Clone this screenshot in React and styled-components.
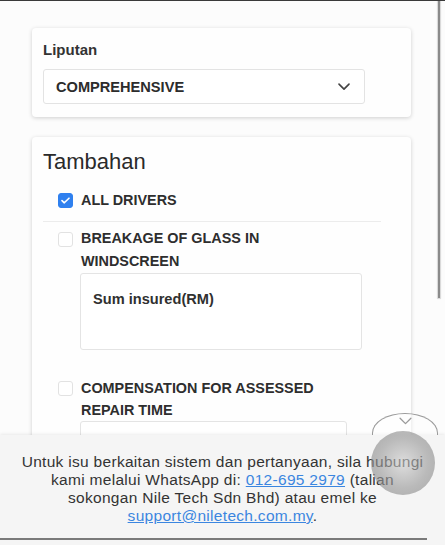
import styled, { createGlobalStyle } from 'styled-components';

const GlobalStyle = createGlobalStyle`
  html, body {
    margin: 0;
    padding: 0;
    background: #fcfcfc;
    font-family: "Liberation Sans", Arial, sans-serif;
    color: #2f2f2f;
  }
  * { box-sizing: border-box; }
`;

//! Page
const Screen = styled.div`
  position: relative;
  width: 445px;
  height: 545px;
  overflow: hidden;
  border-top: 1px solid #3a3a3a;
`;

const Content = styled.div`
  display: flex;
  flex-direction: column;
  gap: 20px;
  padding: 27px 0 0 32px;
  width: 411px;
`;

const ScrollBar = styled.div`
  position: absolute;
  top: 0;
  right: 5px;
  width: 2px;
  height: 297px;
  background: #8a8a8a;
  box-shadow: 0 0 1px 1px #d6d6d6;
`;

const Card = styled.div`
  background: #fefefe;
  border-radius: 4px;
  box-shadow: 0 1px 4px rgba(0, 0, 0, 0.18);
  padding: ${(p) => p.$pad || '12px 11px 13px'};
`;

const Label = styled.div`
  font-size: 15px;
  font-weight: 700;
  line-height: 20px;
  color: #333;
  margin-bottom: 9px;
`;

const Select = styled.div`
  display: flex;
  align-items: center;
  justify-content: space-between;
  width: 322px;
  height: 35px;
  padding: 0 14px 0 12px;
  border: 1px solid #e3e3e3;
  border-radius: 3px;
  background: #fff;
  font-size: 14.6px;
  font-weight: 700;
  color: #2c2c2c;
`;

const Heading = styled.div`
  font-size: 22px;
  line-height: 26px;
  color: #2a2a2a;
  margin-bottom: 14px;
`;

const Option = styled.div`
  width: 338px;
  padding: ${(p) => p.$pad || '0'};
  border-bottom: ${(p) => (p.$divider ? '1px solid #ececec' : 'none')};
`;

const OptionRow = styled.div`
  display: flex;
  align-items: flex-start;
  gap: 8px;
  padding-left: 15px;
`;

const Box = styled.div`
  flex: none;
  width: 15px;
  height: 15px;
  margin-top: ${(p) => p.$top || '4px'};
  border-radius: 3px;
  border: 1px solid ${(p) => (p.$checked ? '#2f80ef' : '#e2e2e2')};
  background: ${(p) => (p.$checked ? '#2f80ef' : '#fff')};
  display: flex;
  align-items: center;
  justify-content: center;
`;

const OptionText = styled.div`
  font-size: 14.4px;
  font-weight: 700;
  line-height: ${(p) => p.$lh || '22px'};
  color: #2e2e2e;
`;

const Field = styled.div`
  margin-left: 37px;
  width: ${(p) => p.$w || '282px'};
  height: 77px;
  border: 1px solid #e4e4e4;
  border-radius: 3px;
  background: #fff;
  padding: 17px 12px;
  font-size: 14.6px;
  font-weight: 700;
  color: #303030;
`;

//! Footer overlay
const Footer = styled.div`
  position: absolute;
  left: 0;
  right: 0;
  bottom: 0;
  height: 110px;
  background: #f5f5f5;
  box-shadow: 0 -1px 3px rgba(0, 0, 0, 0.08);
  padding: 18px 0 0;
  text-align: center;
  font-size: 15.5px;
  letter-spacing: 0.3px;
  line-height: 18px;
  color: #333;
`;

const Link = styled.a`
  color: #3b86e0;
  text-decoration: underline;
`;

const HomeBar = styled.div`
  position: absolute;
  left: 0;
  bottom: 5px;
  width: 427px;
  height: 2px;
  background: #7a7a7a;
`;

const Tab = styled.div`
  position: absolute;
  left: 372px;
  top: 412px;
  width: 66px;
  height: 22px;
  border: 1px solid #9a9a9a;
  border-bottom: none;
  border-radius: 33px 33px 0 0 / 20px 20px 0 0;
  background: rgba(255, 255, 255, 0.4);
  display: flex;
  justify-content: center;
  padding-top: 3px;
`;

const Touch = styled.div`
  position: absolute;
  left: 371px;
  top: 430px;
  width: 64px;
  height: 64px;
  border-radius: 50%;
  background: radial-gradient(circle, rgba(205, 205, 205, 0.6) 0%, rgba(150, 150, 150, 0.62) 55%, rgba(128, 128, 128, 0.65) 100%);
`;

const Chevron = ({ size = 12, color = '#444', width = 1.6 }) => (
  <svg width={size} height={size * 0.6} viewBox="0 0 12 7" fill="none">
    <path d="M1 1l5 5 5-5" stroke={color} strokeWidth={width} strokeLinecap="round" strokeLinejoin="round" />
  </svg>
);

const Tick = () => (
  <svg width="9" height="7" viewBox="0 0 9 7" fill="none">
    <path d="M1 3.6l2.3 2.2L8 1.2" stroke="#fff" strokeWidth="1.6" strokeLinecap="round" strokeLinejoin="round" />
  </svg>
);

const App = () => {
  return (
    <>
      <GlobalStyle />
      <Screen>
        <Content>
          <Card>
            <Label>Liputan</Label>
            <Select>
              COMPREHENSIVE
              <Chevron />
            </Select>
          </Card>

          <Card $pad="12px 11px 40px">
            <Heading>Tambahan</Heading>
            <Option $divider $pad="0 0 10px">
              <OptionRow>
                <Box $checked $top="3.5px">
                  <Tick />
                </Box>
                <OptionText>ALL DRIVERS</OptionText>
              </OptionRow>
            </Option>
            <Option $pad="5px 0 0">
              <OptionRow>
                <Box $top="5px" />
                <OptionText $lh="23px">
                  BREAKAGE OF GLASS IN
                  <br />
                  WINDSCREEN
                </OptionText>
              </OptionRow>
              <Field>Sum insured(RM)</Field>
            </Option>
            <Option $pad="27px 0 0">
              <OptionRow>
                <Box $top="4px" />
                <OptionText>
                  COMPENSATION FOR ASSESSED
                  <br />
                  REPAIR TIME
                </OptionText>
              </OptionRow>
              <Field $w="267px" />
            </Option>
          </Card>
        </Content>

        <ScrollBar />

        <Footer>
          Untuk isu berkaitan sistem dan pertanyaan, sila hubungi
          <br />
          kami melalui WhatsApp di: <Link href="#">012-695 2979</Link> (talian
          <br />
          sokongan Nile Tech Sdn Bhd) atau emel ke
          <br />
          <Link href="#">support@niletech.com.my</Link>.
          <HomeBar />
        </Footer>

        <Tab>
          <Chevron size={13} color="#9a9a9a" width={1.2} />
        </Tab>
        <Touch />
      </Screen>
    </>
  );
};

export default App;
